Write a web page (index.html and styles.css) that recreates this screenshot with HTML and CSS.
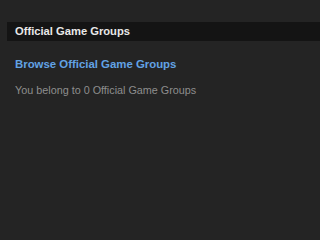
FILE: index.html
```html
<!DOCTYPE html>
<html>
<head>
<meta charset="utf-8">
<link rel="stylesheet" href="styles.css">
</head>
<body>
<div class="panel">
  <div class="header">Official Game Groups</div>
  <div class="content">
    <a class="browse" href="#">Browse Official Game Groups</a>
    <div class="count">You belong to 0 Official Game Groups</div>
  </div>
</div>
</body>
</html>
```
FILE: styles.css
```css
html, body {
  margin: 0;
  padding: 0;
  background: #242424;
}
.panel {
  padding: 22px 0 0 7px;
  font-family: "Liberation Sans", Arial, sans-serif;
}
.header {
  background: #141414;
  color: #e8e8e8;
  font-weight: bold;
  font-size: 11.2px;
  height: 19px;
  line-height: 19px;
  padding-left: 8px;
}
.content {
  padding: 16px 0 0 8px;
}
.browse {
  display: block;
  color: #62a2e4;
  font-weight: bold;
  font-size: 11.4px;
  line-height: 14px;
  text-decoration: none;
}
.count {
  margin-top: 12px;
  color: #8e8e8e;
  font-size: 10.8px;
  line-height: 14px;
}
```
